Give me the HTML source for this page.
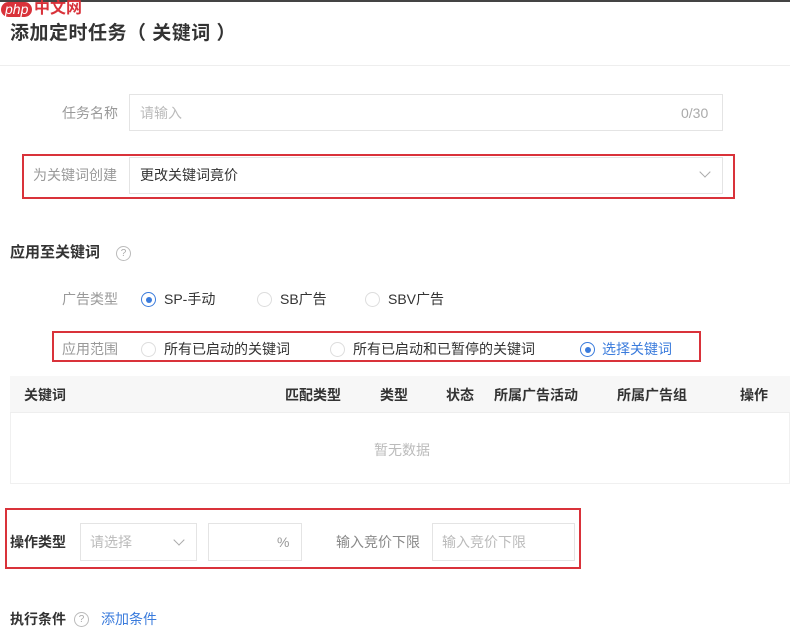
<!DOCTYPE html>
<html><head><meta charset="utf-8"><style>
*{margin:0;padding:0;box-sizing:border-box}
body{width:790px;height:643px;background:#fff;position:relative;overflow:hidden;font-family:"Liberation Sans","Noto Sans CJK SC",sans-serif;color:#333;font-size:14px}
.a{position:absolute;white-space:nowrap;line-height:18px}
.box{position:absolute;border:1px solid #e4e4e4;background:#fff}
.red{position:absolute;border:2px solid #d9323a}
.lbl{color:#999;font-size:14px}
.r{position:absolute;width:15px;height:15px;border:1px solid #ddd;border-radius:50%}
.r.on{border-color:#3a7bdc}
.r.on::after{content:"";position:absolute;left:3.5px;top:3.5px;width:6px;height:6px;border-radius:50%;background:#3a7bdc}
.q{position:absolute;width:15px;height:15px;border:1px solid #bbb;border-radius:50%;font-size:10px;color:#aaa;text-align:center;line-height:13px}
.th{position:absolute;top:386px;font-weight:bold;font-size:14px;color:#333;line-height:18px}
.chev{position:absolute;width:8px;height:8px;border-right:1px solid #aaa;border-bottom:1px solid #aaa;transform:rotate(45deg)}
</style></head><body>
<div class="a" style="left:0;top:0;width:790px;height:2px;background:#444"></div>
<div class="a" style="left:1px;top:2px;font-size:14px;color:#fff;background:#d9323a;border-radius:9px;padding:0 4px;line-height:15px;font-style:italic">php</div>
<div class="a" style="left:34px;top:0px;font-size:16px;color:#d9323a;line-height:17px;font-weight:bold">中文网</div>
<div class="a" style="left:10px;top:22px;font-size:19px;font-weight:bold;color:#333;letter-spacing:0.5px;line-height:24px">添加定时任务（ 关键词 ）</div>
<div class="a" style="left:0;top:65px;width:790px;height:1px;background:#eee"></div>

<div class="a lbl" style="left:62px;top:104px">任务名称</div>
<div class="box" style="left:129px;top:94px;width:594px;height:37px"></div>
<div class="a" style="left:140px;top:104px;color:#bbb">请输入</div>
<div class="a" style="left:681px;top:104px;color:#aaa">0/30</div>

<div class="red" style="left:22px;top:154px;width:713px;height:45px"></div>
<div class="a lbl" style="left:33px;top:166px">为关键词创建</div>
<div class="box" style="left:129px;top:157px;width:594px;height:37px"></div>
<div class="a" style="left:140px;top:166px;color:#333">更改关键词竟价</div>
<div class="chev" style="left:701px;top:168px"></div>

<div class="a" style="left:10px;top:244px;font-size:15px;font-weight:bold">应用至关键词</div>
<div class="q" style="left:116px;top:246px">?</div>

<div class="a lbl" style="left:62px;top:290px">广告类型</div>
<div class="r on" style="left:141px;top:292px"></div><div class="a" style="left:164px;top:290px">SP-手动</div>
<div class="r" style="left:257px;top:292px"></div><div class="a" style="left:280px;top:290px">SB广告</div>
<div class="r" style="left:365px;top:292px"></div><div class="a" style="left:388px;top:290px">SBV广告</div>

<div class="red" style="left:52px;top:331px;width:649px;height:31px"></div>
<div class="a lbl" style="left:62px;top:340px">应用范围</div>
<div class="r" style="left:141px;top:342px"></div><div class="a" style="left:164px;top:340px">所有已启动的关键词</div>
<div class="r" style="left:330px;top:342px"></div><div class="a" style="left:353px;top:340px">所有已启动和已暂停的关键词</div>
<div class="r on" style="left:580px;top:342px"></div><div class="a" style="left:602px;top:340px;color:#3a7bdc">选择关键词</div>

<div class="a" style="left:10px;top:376px;width:780px;height:108px;border:1px solid #f0f0f0"></div>
<div class="a" style="left:10px;top:376px;width:780px;height:37px;background:#f7f7f7;border-bottom:1px solid #eee"></div>
<div class="th" style="left:24px">关键词</div>
<div class="th" style="left:285px">匹配类型</div>
<div class="th" style="left:380px">类型</div>
<div class="th" style="left:446px">状态</div>
<div class="th" style="left:494px">所属广告活动</div>
<div class="th" style="left:617px">所属广告组</div>
<div class="th" style="left:740px">操作</div>
<div class="a" style="left:374px;top:441px;color:#bbb">暂无数据</div>

<div class="red" style="left:5px;top:508px;width:576px;height:61px"></div>
<div class="a" style="left:10px;top:533px;font-weight:bold;font-size:14px">操作类型</div>
<div class="box" style="left:80px;top:523px;width:117px;height:38px"></div>
<div class="a" style="left:90px;top:533px;color:#bbb">请选择</div>
<div class="chev" style="left:175px;top:536px"></div>
<div class="box" style="left:208px;top:523px;width:94px;height:38px"></div>
<div class="a" style="left:277px;top:533px;color:#999">%</div>
<div class="a" style="left:336px;top:533px;color:#888">输入竞价下限</div>
<div class="box" style="left:432px;top:523px;width:143px;height:38px"></div>
<div class="a" style="left:442px;top:533px;color:#bbb">输入竞价下限</div>

<div class="a" style="left:10px;top:610px;font-weight:bold;font-size:14px">执行条件</div>
<div class="q" style="left:74px;top:612px">?</div>
<div class="a" style="left:101px;top:610px;color:#3a7bdc">添加条件</div>
</body></html>
